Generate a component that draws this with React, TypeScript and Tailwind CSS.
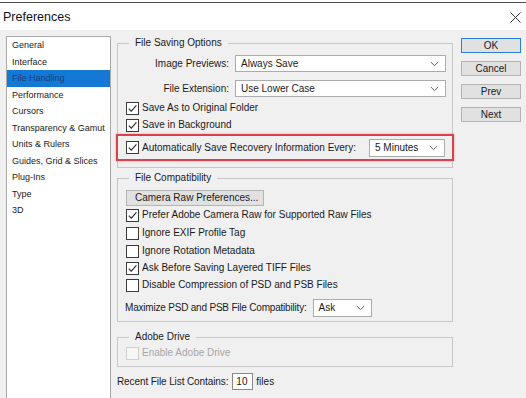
import React from "react";

function Check({ checked, disabled }: { checked?: boolean; disabled?: boolean }) {
  return (
    <span
      className={
        disabled
          ? "w-[13px] h-[13px] border border-[#d0d0d0] bg-[#f7f7f7] flex items-center justify-center shrink-0"
          : "w-[13px] h-[13px] border border-[#3a3a3a] bg-white flex items-center justify-center shrink-0"
      }
    >
      {checked && (
        <svg width="11" height="11" viewBox="0 0 11 11">
          <path d="M1.8 5.6 L4.3 8.2 L9.4 2.4" fill="none" stroke="#2a2a2a" strokeWidth="1.1" />
        </svg>
      )}
    </span>
  );
}

function Chevron() {
  return (
    <svg width="9" height="6" viewBox="0 0 9 6" className="shrink-0">
      <path d="M0.8 1 L4.5 4.6 L8.2 1" fill="none" stroke="#606060" strokeWidth="1" />
    </svg>
  );
}

function CheckRow({ label, checked, disabled, cls }: { label: string; checked?: boolean; disabled?: boolean; cls: string }) {
  return (
    <div className={"flex items-center h-[14px] gap-[3px] pl-[8px] " + cls}>
      <Check checked={checked} disabled={disabled} />
      <span className={disabled ? "text-[#a6a6a6]" : "text-[#1a1a1a]"}>{label}</span>
    </div>
  );
}

function Btn({ label, primary }: { label: string; primary?: boolean }) {
  return (
    <div
      className={
        primary
          ? "h-[15px] w-[60px] bg-[#e1e1e1] border border-[#2a7fd4] flex items-center justify-center text-[10px] text-[#1a1a1a]"
          : "h-[15px] w-[60px] bg-[#e1e1e1] border border-[#b4b4b4] flex items-center justify-center text-[10px] text-[#1a1a1a]"
      }
    >
      {label}
    </div>
  );
}

const items = [
  "General",
  "Interface",
  "File Handling",
  "Performance",
  "Cursors",
  "Transparency & Gamut",
  "Units & Rulers",
  "Guides, Grid & Slices",
  "Plug-Ins",
  "Type",
  "3D",
];

export default function App() {
  return (
    <div className="w-[526px] h-[398px] overflow-hidden bg-[#f0f0f0] font-['Liberation_Sans',Arial,sans-serif] text-[10px] leading-[12px] text-[#1a1a1a]">
      {/* title bar */}
      <div className="bg-white pt-[2px]">
        <div className="h-[28px] border-t border-[#4a4a4a] flex items-center justify-between pl-[3px] pr-[5px]">
          <span className="text-[12.5px] leading-[16px] text-[#111]">Preferences</span>
          <svg width="11" height="11" viewBox="0 0 11 11" className="mt-[2px]">
            <path d="M0.5 0.5 L10.5 10.5 M10.5 0.5 L0.5 10.5" stroke="#333" strokeWidth="1" />
          </svg>
        </div>
      </div>

      {/* body */}
      <div className="flex pt-[6px]">
        {/* category list */}
        <div className="ml-[6px] w-[105px] h-[400px] bg-white border border-[#a9a9a9] shrink-0">
          {items.map((it) => (
            <div
              key={it}
              className={
                it === "File Handling"
                  ? "h-[16.5px] flex items-center pl-[5px] bg-[#1479d4] text-[#143f7e] text-[9px]"
                  : "h-[16.5px] flex items-center pl-[5px] text-[#1a1a1a] text-[9px]"
              }
            >
              {it}
            </div>
          ))}
        </div>

        {/* main column */}
        <div className="ml-[6px] w-[336px] mt-[1px] flex flex-col shrink-0">
          <fieldset className="border border-[#c6c6c6] pb-[6px]">
            <legend className="ml-[11px] px-[6px] leading-[12px]">File Saving Options</legend>
            <div className="mt-[6px] h-[17px] flex items-center">
              <span className="w-[111px] text-right">Image Previews:</span>
              <div className="ml-[6px] w-[211px] h-[17px] bg-white border border-[#ababab] flex items-center justify-between pl-[5px] pr-[6px]">
                <span>Always Save</span>
                <Chevron />
              </div>
            </div>
            <div className="mt-[8px] h-[17px] flex items-center">
              <span className="w-[111px] text-right">File Extension:</span>
              <div className="ml-[6px] w-[211px] h-[17px] bg-white border border-[#ababab] flex items-center justify-between pl-[5px] pr-[6px]">
                <span>Use Lower Case</span>
                <Chevron />
              </div>
            </div>
            <CheckRow cls="mt-[4px]" label="Save As to Original Folder" checked />
            <CheckRow cls="mt-[3px]" label="Save in Background" checked />
            <div className="mt-[2px] mx-[-2px] h-[27px] border-2 border-[#d9414f] shadow-[0_0_2px_rgba(217,65,79,0.5)] flex items-center pl-[8px] pr-[7px]">
              <Check checked />
              <span className="ml-[3px]">Automatically Save Recovery Information Every:</span>
              <div className="ml-auto w-[76px] h-[18px] bg-white border border-[#ababab] flex items-center justify-between pl-[5px] pr-[6px]">
                <span>5 Minutes</span>
                <Chevron />
              </div>
            </div>
          </fieldset>

          <fieldset className="mt-[4px] border border-[#c6c6c6] pb-[4px]">
            <legend className="ml-[11px] px-[6px] leading-[12px]">File Compatibility</legend>
            <div className="mt-[6px] ml-[8px] w-[138px] h-[16px] bg-[#e1e1e1] border border-[#b4b4b4] flex items-center pl-[8px]">
              Camera Raw Preferences...
            </div>
            <CheckRow cls="mt-[2px]" label="Prefer Adobe Camera Raw for Supported Raw Files" checked />
            <CheckRow cls="mt-[4px]" label="Ignore EXIF Profile Tag" />
            <CheckRow cls="mt-[4px]" label="Ignore Rotation Metadata" />
            <CheckRow cls="mt-[3px]" label="Ask Before Saving Layered TIFF Files" checked />
            <CheckRow cls="mt-[3px]" label="Disable Compression of PSD and PSB Files" />
            <div className="mt-[7px] h-[18px] flex items-center pl-[7px]">
              <span className="tracking-[-0.2px]">Maximize PSD and PSB File Compatibility:</span>
              <div className="ml-[6px] w-[59px] h-[18px] bg-white border border-[#ababab] flex items-center justify-between pl-[5px] pr-[6px]">
                <span>Ask</span>
                <Chevron />
              </div>
            </div>
          </fieldset>

          <fieldset className="mt-[9px] border border-[#c6c6c6] pb-[6px]">
            <legend className="ml-[11px] px-[6px] leading-[12px]">Adobe Drive</legend>
            <CheckRow cls="mt-[3px]" label="Enable Adobe Drive" disabled />
          </fieldset>

          <div className="mt-[6px] h-[17px] flex items-center">
            <span className="tracking-[-0.1px]">Recent File List Contains:</span>
            <div className="ml-[4px] w-[21px] h-[17px] bg-white border border-[#8a8a8a] flex items-center pl-[3px]">10</div>
            <span className="ml-[3px]">files</span>
          </div>
        </div>

        {/* buttons */}
        <div className="ml-[8px] mt-[2px] flex flex-col gap-[8px] shrink-0">
          <Btn label="OK" primary />
          <Btn label="Cancel" />
          <Btn label="Prev" />
          <Btn label="Next" />
        </div>
      </div>
    </div>
  );
}
